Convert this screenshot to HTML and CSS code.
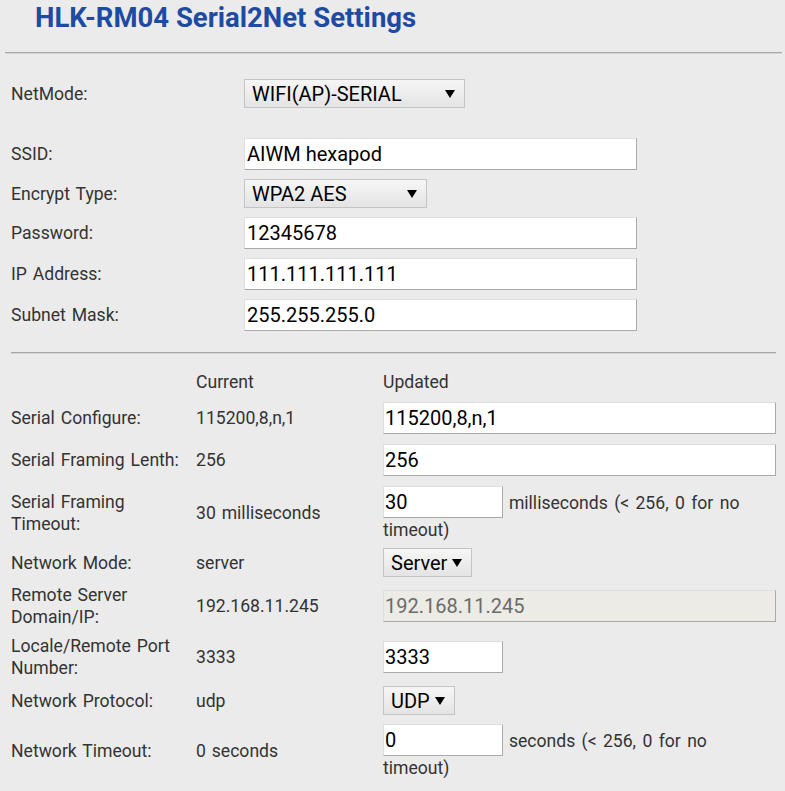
FILE: index.html
```html
<!DOCTYPE html>
<html>
<head>
<meta charset="utf-8">
<title>HLK-RM04 Serial2Net Settings</title>
<link rel="stylesheet" href="styles.css">
</head>
<body>
<h1 class="title">HLK-RM04 Serial2Net Settings</h1>
<div class="rule rule-top"></div>
<table class="form form-net">
  <tr>
    <td class="label">NetMode:</td>
    <td><div class="select select-wide"><span>WIFI(AP)-SERIAL</span><svg class="arrow" width="10" height="8" viewBox="0 0 10 8"><path d="M0 0H10L5 8Z"/></svg></div></td>
  </tr>
  <tr class="blank"><td colspan="2"></td></tr>
  <tr>
    <td class="label">SSID:</td>
    <td><input class="field" type="text" value="AIWM hexapod"></td>
  </tr>
  <tr>
    <td class="label">Encrypt Type:</td>
    <td><div class="select select-mid"><span>WPA2 AES</span><svg class="arrow" width="10" height="8" viewBox="0 0 10 8"><path d="M0 0H10L5 8Z"/></svg></div></td>
  </tr>
  <tr>
    <td class="label">Password:</td>
    <td><input class="field" type="text" value="12345678"></td>
  </tr>
  <tr>
    <td class="label">IP Address:</td>
    <td><input class="field" type="text" value="111.111.111.111"></td>
  </tr>
  <tr>
    <td class="label">Subnet Mask:</td>
    <td><input class="field" type="text" value="255.255.255.0"></td>
  </tr>
</table>
<div class="rule rule-mid"></div>
<table class="form form-serial">
  <tr class="head">
    <td class="label"></td>
    <td class="current">Current</td>
    <td class="updated">Updated</td>
  </tr>
  <tr>
    <td class="label">Serial Configure:</td>
    <td class="current">115200,8,n,1</td>
    <td class="updated"><input class="field" type="text" value="115200,8,n,1"></td>
  </tr>
  <tr>
    <td class="label">Serial Framing Lenth:</td>
    <td class="current">256</td>
    <td class="updated"><input class="field" type="text" value="256"></td>
  </tr>
  <tr>
    <td class="label">Serial Framing Timeout:</td>
    <td class="current">30 milliseconds</td>
    <td class="updated"><input class="field short" type="text" value="30"> <span class="note">milliseconds (&lt; 256, 0 for no timeout)</span></td>
  </tr>
  <tr>
    <td class="label">Network Mode:</td>
    <td class="current">server</td>
    <td class="updated"><div class="select"><span>Server</span><svg class="arrow" width="10" height="8" viewBox="0 0 10 8"><path d="M0 0H10L5 8Z"/></svg></div></td>
  </tr>
  <tr>
    <td class="label">Remote Server Domain/IP:</td>
    <td class="current">192.168.11.245</td>
    <td class="updated"><input class="field" type="text" value="192.168.11.245" disabled></td>
  </tr>
  <tr>
    <td class="label">Locale/Remote Port Number:</td>
    <td class="current">3333</td>
    <td class="updated"><input class="field short" type="text" value="3333"></td>
  </tr>
  <tr>
    <td class="label">Network Protocol:</td>
    <td class="current">udp</td>
    <td class="updated"><div class="select"><span>UDP</span><svg class="arrow" width="10" height="8" viewBox="0 0 10 8"><path d="M0 0H10L5 8Z"/></svg></div></td>
  </tr>
  <tr>
    <td class="label">Network Timeout:</td>
    <td class="current">0 seconds</td>
    <td class="updated"><input class="field short" type="text" value="0"> <span class="note">seconds (&lt; 256, 0 for no timeout)</span></td>
  </tr>
</table>
</body>
</html>
```
FILE: styles.css
```css
html, body {
  margin: 0;
  padding: 0;
  background: #ebebeb;
}
body {
  font-family: Roboto, "Liberation Sans", sans-serif;
  font-size: 17.6px;
  word-spacing: 1.5px;
  color: #333;
}
.title {
  margin: 0 0 0 35px;
  padding-top: 3px;
  font-size: 27.5px;
  line-height: 30px;
  font-weight: 700;
  word-spacing: 0;
  color: #1d4aa3;
}
.rule {
  height: 0;
  border-top: 1px solid #a6a6a6;
  border-bottom: 1px solid #d6d6d6;
}
.rule-top {
  margin: 19px 3px 0 5px;
}
.rule-mid {
  margin: 16.5px 9px 0 11px;
}
.form {
  border-collapse: collapse;
  border-spacing: 0;
  margin-left: 11px;
}
.form td {
  padding: 0;
  vertical-align: middle;
  line-height: 22px;
}
.form-net {
  margin-top: 20.5px;
}
.form-net td {
  padding: 4.5px 0;
}
.form-net .label {
  width: 233px;
}
.form-net .blank td {
  height: 21px;
  padding: 0;
}
.form-net .field {
  width: 393px;
  padding: 0 2px;
}
.form-serial {
  margin-top: 13.5px;
  width: 765px;
  table-layout: fixed;
}
.form-serial td {
  padding: 3.5px 0;
}
.form-serial .label {
  width: 181px;
  padding-right: 4px;
}
.form-serial .current {
  width: 187px;
}
.form-serial .field {
  margin: 1.5px 0;
  width: 393px;
  padding: 0 1px;
}
.form-serial .field.short {
  width: 120px;
}
.note {
  word-spacing: 2px;
}
.field {
  box-sizing: border-box;
  height: 32px;
  font-family: Roboto, "Liberation Sans", sans-serif;
  font-size: 20px;
  word-spacing: 0;
  color: #000;
  background: #fff;
  border: 1px solid;
  border-color: #dedede #a9a9a9 #a9a9a9 #dedede;
  border-radius: 0;
  outline: none;
  vertical-align: baseline;
}
.field:disabled {
  background: #ecebe5;
  color: #6b6b6b;
}
.select {
  box-sizing: border-box;
  display: inline-flex;
  align-items: center;
  justify-content: space-between;
  gap: 5px;
  height: 29px;
  padding: 0 9px 0 7px;
  font-size: 20px;
  word-spacing: 0;
  color: #000;
  background: linear-gradient(#f6f6f6, #e4e4e4);
  border: 1px solid #c4c4c4;
  vertical-align: middle;
}
.select-wide {
  width: 221px;
}
.select-mid {
  width: 183px;
}
.arrow {
  flex: none;
  fill: #000;
}
```
